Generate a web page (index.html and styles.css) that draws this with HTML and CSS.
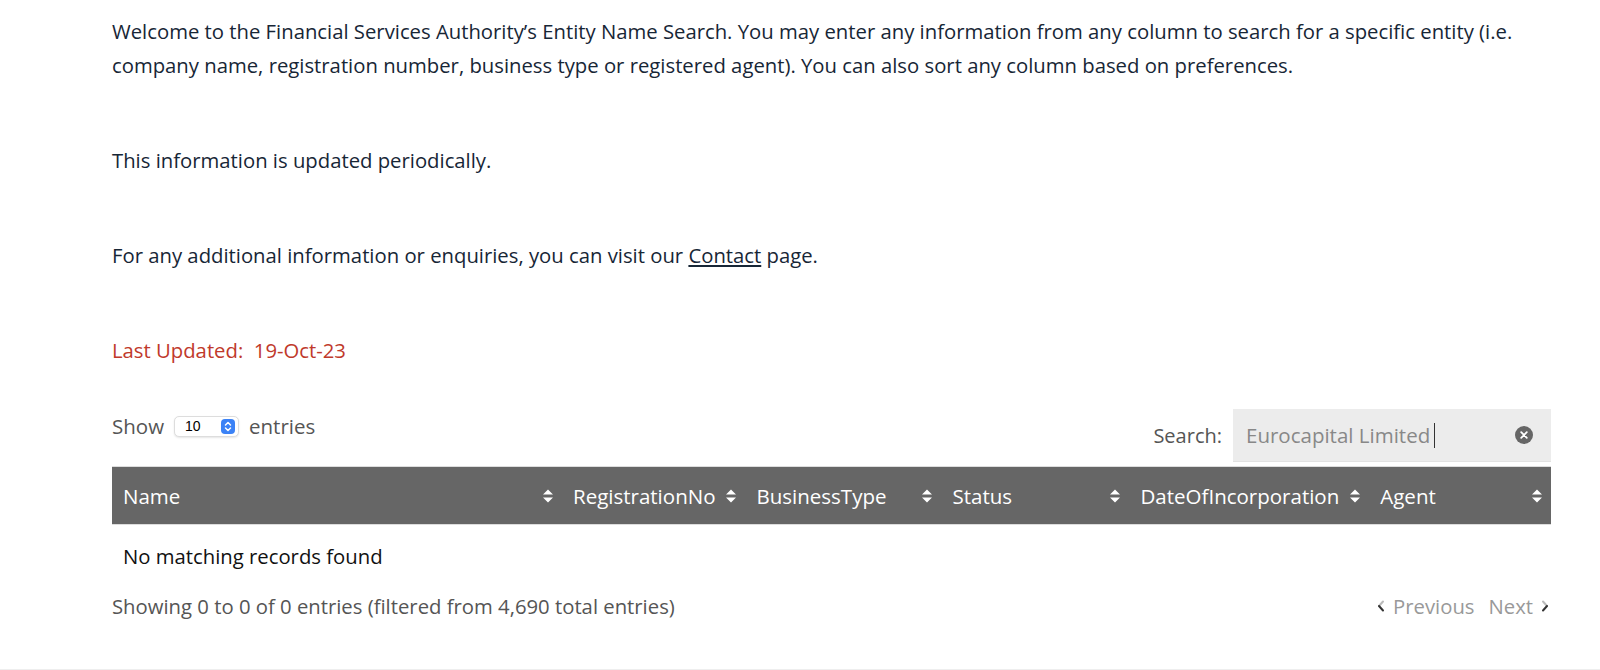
FILE: index.html
```html
<!DOCTYPE html>
<html lang="en">
<head>
    <meta charset="UTF-8">
    <meta name="viewport" content="width=device-width, initial-scale=1.0">
    <title>Entity Name Search</title>
    <link rel="stylesheet" href="styles.css">
</head>
<body>

<div class="page">
    <div class="intro">
        <p>Welcome to the Financial Services Authority’s Entity Name Search. You may enter any information from any column to search for a specific entity (i.e. company name, registration number, business type or registered agent). You can also sort any column based on preferences.</p>
        <p>This information is updated periodically.</p>
        <p>For any additional information or enquiries, you can visit our <a href="#">Contact</a> page.</p>
        <p class="updated">Last Updated:&nbsp; 19-Oct-23</p>
    </div>

    <!-- Entity table -->
    <div class="table-wrap">
        <div class="controls">
            <div class="length">
                Show
                <span class="select">
                    <span class="select-value">10</span>
                    <span class="select-btn">
                        <svg width="8" height="11" viewBox="0 0 8 11"><path d="M1.5 4 L4 1.5 L6.5 4 M1.5 7 L4 9.5 L6.5 7" fill="none" stroke="#fff" stroke-width="1.5" stroke-linecap="round" stroke-linejoin="round"/></svg>
                    </span>
                </span>
                entries
            </div>
            <div class="filter">
                <label>Search:</label>
                <div class="search-box">
                    <span class="search-text">Eurocapital Limited</span><span class="caret"></span>
                    <span class="clear">
                        <svg width="18" height="18" viewBox="0 0 18 18"><circle cx="9" cy="9" r="9" fill="#666"/><path d="M6.2 6.2 L11.8 11.8 M11.8 6.2 L6.2 11.8" stroke="#fff" stroke-width="1.8" stroke-linecap="round"/></svg>
                    </span>
                </div>
            </div>
        </div>

        <table class="entities">
            <thead>
                <tr>
                    <th class="col-name">Name</th>
                    <th class="col-reg">RegistrationNo</th>
                    <th class="col-type">BusinessType</th>
                    <th class="col-status">Status</th>
                    <th class="col-date">DateOfIncorporation</th>
                    <th class="col-agent">Agent</th>
                </tr>
            </thead>
            <tbody>
                <tr>
                    <td colspan="6" class="empty">No matching records found</td>
                </tr>
            </tbody>
        </table>

        <div class="footer-row">
            <div class="info">Showing 0 to 0 of 0 entries (filtered from 4,690 total entries)</div>
            <div class="paging">
                <span class="chev">
                    <svg width="8" height="12" viewBox="0 0 8 12"><path d="M6 1.5 L2 6" stroke="#bbb" stroke-width="2" stroke-linecap="round"/><path d="M2 6 L6 10.5" stroke="#333" stroke-width="2" stroke-linecap="round"/></svg>
                </span>
                <a class="page-btn">Previous</a>
                <a class="page-btn">Next</a>
                <span class="chev">
                    <svg width="8" height="12" viewBox="0 0 8 12"><path d="M2 1.5 L6 6" stroke="#bbb" stroke-width="2" stroke-linecap="round"/><path d="M6 6 L2 10.5" stroke="#333" stroke-width="2" stroke-linecap="round"/></svg>
                </span>
            </div>
        </div>
    </div>
</div>

<div class="bottom-line"></div>

</body>
</html>
```

FILE: styles.css
```css
body {
    font-family: 'Open Sans', 'Noto Sans', sans-serif;
    margin: 0;
    padding: 0;
    background-color: #fff;
    color: #172636;
}
.page {
    padding: 14px 49px 0 112px;
    height: 655px;
}
.intro p {
    font-size: 20.3px;
    line-height: 34px;
    margin: 0 0 61px 0;
}
.intro a {
    color: #172636;
    text-decoration: underline;
}
.intro .updated {
    color: #c0392b;
    margin-bottom: 42px;
}
/* Controls above the table */
.controls {
    display: flex;
    justify-content: space-between;
    align-items: flex-start;
    margin-bottom: 4px;
}
.length {
    display: flex;
    align-items: center;
    gap: 10px;
    font-size: 20.5px;
    line-height: 34px;
    color: #555;
}
.select {
    display: flex;
    align-items: center;
    justify-content: space-between;
    width: 65px;
    height: 21px;
    box-sizing: border-box;
    padding: 0 3px 0 10px;
    border: 1px solid #ddd;
    border-radius: 5px;
    box-shadow: 0 1px 2px rgba(0,0,0,0.1);
    background-color: #fff;
}
.select-value {
    font-family: 'Liberation Sans', sans-serif;
    font-size: 14px;
    color: #000;
}
.select-btn {
    display: flex;
    align-items: center;
    justify-content: center;
    width: 14px;
    height: 15px;
    border-radius: 4px;
    background-color: #3b82f6;
}
.filter {
    display: flex;
    align-items: center;
    gap: 11px;
    font-size: 20px;
    color: #555;
}
.search-box {
    display: flex;
    align-items: center;
    width: 318px;
    height: 53px;
    box-sizing: border-box;
    padding: 0 18px 0 13px;
    background-color: #ececec;
    border-bottom: 1px solid #e2e2e2;
}
.search-text {
    color: #888;
    font-size: 20.5px;
}
.caret {
    display: inline-block;
    width: 1px;
    height: 25px;
    margin-left: 4px;
    background-color: #333;
}
.clear {
    margin-left: auto;
    display: flex;
}
/* Table */
.entities {
    width: 100%;
    border-collapse: collapse;
}
.entities th {
    background-color: #666;
    color: #fff;
    font-weight: normal;
    font-size: 20.5px;
    text-align: left;
    height: 57px;
    padding: 0 30px 0 11px;
    position: relative;
    border-top: 1px solid #ddd;
    border-bottom: 1px solid #ddd;
}
.entities th::after {
    content: "";
    position: absolute;
    right: 8px;
    top: 50%;
    width: 12px;
    height: 16px;
    margin-top: -8px;
    background: url("data:image/svg+xml,%3Csvg xmlns='http://www.w3.org/2000/svg' width='12' height='16' viewBox='0 0 12 16'%3E%3Cpath d='M1 6.5 L6 1.5 L11 6.5 Z M1 9.5 L6 14.5 L11 9.5 Z' fill='%23fff'/%3E%3C/svg%3E") no-repeat center;
}
.col-name { width: 409px; }
.col-reg { width: 140px; }
.col-type { width: 155px; }
.col-status { width: 147px; }
.col-date { width: 197px; }
.entities td {
    font-size: 20.3px;
    color: #111;
    padding: 14px 11px 14px 11px;
    line-height: 34px;
}
.footer-row {
    display: flex;
    justify-content: space-between;
    align-items: center;
    margin-top: 2px;
    font-size: 20.3px;
    line-height: 34px;
}
.info {
    color: #555;
}
.paging {
    display: flex;
    align-items: center;
    gap: 2px;
    color: #999;
    padding-right: 2px;
}
.page-btn {
    padding: 0 6px;
}
.chev {
    display: flex;
}
.bottom-line {
    border-top: 2px solid #eee;
}
```
